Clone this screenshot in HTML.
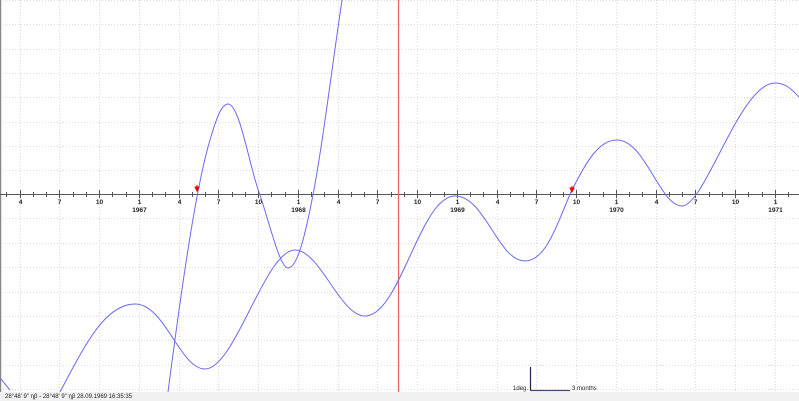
<!DOCTYPE html>
<html><head><meta charset="utf-8"><style>
html,body{margin:0;padding:0;background:#fff;width:799px;height:401px;overflow:hidden;font-family:"Liberation Sans","Noto Sans CJK JP",sans-serif}
</style></head><body>
<svg width="799" height="401" viewBox="0 0 799 401" xmlns="http://www.w3.org/2000/svg" font-family="Liberation Sans, sans-serif">
<rect width="799" height="401" fill="#fff"/>
<g stroke="#dcdcdc" stroke-width="1" stroke-dasharray="1,2">
<line x1="0" y1="0.5" x2="799" y2="0.5"/>
<line x1="0" y1="24.5" x2="799" y2="24.5"/>
<line x1="0" y1="49.5" x2="799" y2="49.5"/>
<line x1="0" y1="73.5" x2="799" y2="73.5"/>
<line x1="0" y1="97.5" x2="799" y2="97.5"/>
<line x1="0" y1="122.5" x2="799" y2="122.5"/>
<line x1="0" y1="146.5" x2="799" y2="146.5"/>
<line x1="0" y1="170.5" x2="799" y2="170.5"/>
<line x1="0" y1="218.5" x2="799" y2="218.5"/>
<line x1="0" y1="243.5" x2="799" y2="243.5"/>
<line x1="0" y1="267.5" x2="799" y2="267.5"/>
<line x1="0" y1="292.5" x2="799" y2="292.5"/>
<line x1="0" y1="316.5" x2="799" y2="316.5"/>
<line x1="0" y1="340.5" x2="799" y2="340.5"/>
<line x1="0" y1="365.5" x2="799" y2="365.5"/>
<line x1="0" y1="389.5" x2="799" y2="389.5"/>
</g>
<g stroke="#dcdcdc" stroke-width="1" stroke-dasharray="1,2" id="vg"></g>
<line x1="0.5" y1="0" x2="0.5" y2="392" stroke="#888" stroke-width="1.5"/>
<line x1="0" y1="194.5" x2="799" y2="194.5" stroke="#555" stroke-width="1"/>
<g id="ticks" stroke="#555" stroke-width="1"></g>
<g font-size="6.5" font-weight="bold" fill="#222" text-anchor="middle" id="lbl"></g>
<line x1="398.5" y1="0" x2="398.5" y2="392" stroke="#f06060" stroke-width="1.2"/>
<g fill="none" stroke="#6a6af0" stroke-width="1">
<path d="M0,378 L10,390"/>
<path d="M60,392 C85,345 105,304 135,304 C165,304 180,369 205,369 C235,369 265,250 295,250 C320,250 340,316 365,316 C400,316 420,196 455,196 C485,196 498,261 525,261 C548,261 560,215 572,190 C588,158 600,140 617,140 C645,140 660,206 682,206 C705,206 740,83 775,83 C787,83 794,92 799,97"/>
<path d="M168,392 C180,300 195,190 210,140 C218,112 223,104 228,104 C240,104 250,170 260,195 C270,225 280,268 288,268 C298,268 306,230 312,200 C322,150 333,60 342,0"/>
</g>
<path d="M195,187 L199,187 L197,191 Z M197,187 L197,185" fill="#e00" stroke="#e00" stroke-width="1"/>
<path d="M570,188 L574,188 L572,192 Z M572,188 L572,186" fill="#e00" stroke="#e00" stroke-width="1"/>
<line x1="530.5" y1="367" x2="530.5" y2="390" stroke="#224" stroke-width="1.2"/>
<line x1="530" y1="390.5" x2="570" y2="390.5" stroke="#447" stroke-width="1.2"/>
<text x="528" y="390" font-size="6" text-anchor="end" fill="#222">1deg.</text>
<text x="572" y="390" font-size="6" fill="#222">3 months</text>
<rect x="0" y="392" width="799" height="9" fill="#f0f0f0"/>
<text x="5" y="398" font-size="6" fill="#222">28°48' 9" ηβ  -  28°48' 9" ηβ   28.09.1969 16:35:35</text>
</svg>
<script>
var ns="http://www.w3.org/2000/svg";
var vg=document.getElementById("vg"),tk=document.getElementById("ticks"),lb=document.getElementById("lbl");
var labs=["4","7","10","1","4","7","10","1","4","7","10","1","4","7","10","1","4","7","10","1"];
var yrs={3:"1967",7:"1968",11:"1969",15:"1970",19:"1971"};
var x0=19.7,dx=39.75;
for(var i=0;i<20;i++){var x=Math.round(x0+i*dx)+0.5;
var l=document.createElementNS(ns,"line");l.setAttribute("x1",x);l.setAttribute("x2",x);l.setAttribute("y1",0);l.setAttribute("y2",392);vg.appendChild(l);
var t=document.createElementNS(ns,"text");t.setAttribute("x",x);t.setAttribute("y",204);t.textContent=labs[i];lb.appendChild(t);
if(yrs[i]){var t2=document.createElementNS(ns,"text");t2.setAttribute("x",x);t2.setAttribute("y",212);t2.textContent=yrs[i];lb.appendChild(t2);}
}
for(var j=-3;j<62;j++){var x=Math.round(x0+j*dx/3)+0.5;var big=(j%3==0);
var l=document.createElementNS(ns,"line");l.setAttribute("x1",x);l.setAttribute("x2",x);l.setAttribute("y1",big?190:192);l.setAttribute("y2",big?198:197);tk.appendChild(l);}
</script>
</body></html>
